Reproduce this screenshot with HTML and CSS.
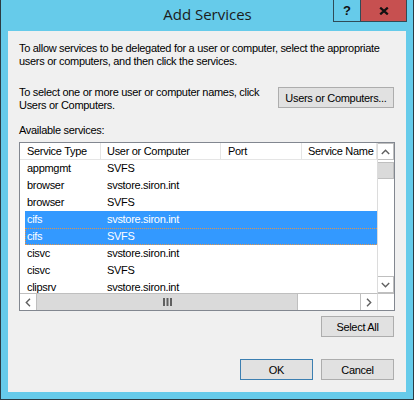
FILE: index.html
```html
<!DOCTYPE html>
<html>
<head>
<meta charset="utf-8">
<link rel="stylesheet" href="styles.css">
</head>
<body>
<div class="window">
  <div class="titlebar">
    <div class="title">Add Services</div>
    <div class="controls">
      <div class="ctl help">?</div>
      <div class="ctl close">
        <svg width="10" height="8" viewBox="0 0 10 8"><path d="M1.2 0.6 L8.8 7.4 M8.8 0.6 L1.2 7.4" stroke="#111" stroke-width="2.2" fill="none"/></svg>
      </div>
    </div>
  </div>
  <div class="client">
    <p class="intro">To allow services to be delegated for a user or computer, select the appropriate<br>users or computers, and then click the services.</p>
    <div class="pick">
      <p class="pick-text">To select one or more user or computer names, click<br>Users or Computers.</p>
      <button class="btn wide">Users or Computers...</button>
    </div>
    <div class="label">Available services:</div>
    <div class="list">
      <div class="content">
        <div class="row head">
          <div class="c c1">Service Type</div>
          <div class="c c2">User or Computer</div>
          <div class="c c3">Port</div>
          <div class="c c4">Service Name</div>
          <div class="c c5"></div>
        </div>
        <div class="row"><div class="c c1">appmgmt</div><div class="c c2">SVFS</div><div class="c c3"></div><div class="c c4"></div><div class="c c5"></div></div>
        <div class="row"><div class="c c1">browser</div><div class="c c2">svstore.siron.int</div><div class="c c3"></div><div class="c c4"></div><div class="c c5"></div></div>
        <div class="row"><div class="c c1">browser</div><div class="c c2">SVFS</div><div class="c c3"></div><div class="c c4"></div><div class="c c5"></div></div>
        <div class="row sel"><div class="c c1">cifs</div><div class="c c2">svstore.siron.int</div><div class="c c3"></div><div class="c c4"></div><div class="c c5"></div></div>
        <div class="row sel focus"><div class="c c1">cifs</div><div class="c c2">SVFS</div><div class="c c3"></div><div class="c c4"></div><div class="c c5"></div></div>
        <div class="row"><div class="c c1">cisvc</div><div class="c c2">svstore.siron.int</div><div class="c c3"></div><div class="c c4"></div><div class="c c5"></div></div>
        <div class="row"><div class="c c1">cisvc</div><div class="c c2">SVFS</div><div class="c c3"></div><div class="c c4"></div><div class="c c5"></div></div>
        <div class="row"><div class="c c1">clipsrv</div><div class="c c2">svstore.siron.int</div><div class="c c3"></div><div class="c c4"></div><div class="c c5"></div></div>
      </div>
      <div class="vscroll">
        <div class="arrow">
          <svg width="9" height="6" viewBox="0 0 9 6"><path d="M0.8 5 L4.5 1.3 L8.2 5" stroke="#606060" stroke-width="1.4" fill="none"/></svg>
        </div>
        <div class="vthumb"></div>
        <div class="vtrack"></div>
        <div class="arrow">
          <svg width="9" height="6" viewBox="0 0 9 6"><path d="M0.8 1 L4.5 4.7 L8.2 1" stroke="#606060" stroke-width="1.4" fill="none"/></svg>
        </div>
      </div>
      <div class="hscroll">
        <div class="arrow">
          <svg width="6" height="9" viewBox="0 0 6 9"><path d="M5 0.8 L1.3 4.5 L5 8.2" stroke="#606060" stroke-width="1.4" fill="none"/></svg>
        </div>
        <div class="hthumb">
          <svg width="9" height="8" viewBox="0 0 9 8"><path d="M1 0 V8 M4.5 0 V8 M8 0 V8" stroke="#606060" stroke-width="2" fill="none"/></svg>
        </div>
        <div class="htrack"></div>
        <div class="arrow">
          <svg width="6" height="9" viewBox="0 0 6 9"><path d="M1 0.8 L4.7 4.5 L1 8.2" stroke="#606060" stroke-width="1.4" fill="none"/></svg>
        </div>
      </div>
      <div class="corner"></div>
    </div>
    <div class="selectall-row">
      <button class="btn std">Select All</button>
    </div>
    <div class="footer">
      <button class="btn std default">OK</button>
      <button class="btn std">Cancel</button>
    </div>
  </div>
</div>
</body>
</html>
```

FILE: styles.css
```css
* { box-sizing: border-box; }
html, body { margin: 0; padding: 0; }
body {
  width: 414px;
  height: 400px;
  overflow: hidden;
  font-family: "Liberation Sans", Arial, sans-serif;
  font-size: 11px;
  letter-spacing: -0.3px;
  color: #000;
}
.window {
  width: 414px;
  height: 400px;
  background: #66cbea;
  border-left: 1px solid #2b3b42;
  border-right: 1px solid #2b3b42;
  border-bottom: 1px solid #2b3b42;
  padding: 0 7px 7px 7px;
  display: flex;
  flex-direction: column;
}
.titlebar {
  height: 31px;
  flex: none;
  display: grid;
  grid-template-columns: 1fr auto 1fr;
}
.title {
  grid-column: 2;
  font-family: "Open Sans", "Noto Sans", sans-serif;
  font-size: 15px;
  letter-spacing: 0;
  color: #1b1b1b;
  padding-top: 4px;
  line-height: 20px;
  margin-left: 1px;
}
.controls {
  grid-column: 3;
  justify-self: end;
  align-self: start;
  display: flex;
  height: 22px;
  margin-right: -1px;
  border: 1px solid #2f4b57;
  border-top: none;
}
.ctl {
  height: 21px;
  display: flex;
  align-items: center;
  justify-content: center;
}
.help {
  width: 27px;
  border-right: 1px solid #2f4b57;
  font-family: "Liberation Sans", Arial, sans-serif;
  font-weight: bold;
  font-size: 13px;
  letter-spacing: 0;
  color: #111;
}
.close {
  width: 45px;
  background: #c75050;
}
.client {
  flex: 1;
  background: #f0f0f0;
  padding: 11px 12px 12px 11px;
  display: flex;
  flex-direction: column;
}
p { margin: 0; }
.intro {
  line-height: 13px;
  white-space: nowrap;
}
.pick {
  margin-top: 18px;
  display: flex;
  justify-content: space-between;
  align-items: flex-start;
}
.pick-text {
  line-height: 13px;
  white-space: nowrap;
}
.btn {
  font-family: "Liberation Sans", Arial, sans-serif;
  font-size: 11px;
  letter-spacing: -0.3px;
  color: #000;
  background: #e1e1e1;
  border: 1px solid #adadad;
  padding: 0;
  margin: 0;
  height: 21px;
}
.wide {
  width: 116px;
  margin-top: 1px;
}
.label {
  margin-top: 12px;
  line-height: 13px;
}
.list {
  margin-top: 5px;
  margin-right: -1px;
  height: 169px;
  border: 1px solid #828790;
  background: #fff;
  display: grid;
  grid-template-columns: 1fr 17px;
  grid-template-rows: 1fr 17px;
}
.content {
  overflow: hidden;
  white-space: nowrap;
}
.row {
  display: flex;
  height: 17px;
  line-height: 17px;
  width: 420px;
}
.row:not(.head) { margin-left: 5px; }
.row.head {
  height: 17px;
  line-height: 16px;
  border-bottom: 1px solid #e5e5e5;
}
.row.head .c { border-right: 1px solid #e5e5e5; }
.row.head .c5 { border-right: none; }
.c { padding-left: 7px; flex: none; overflow: hidden; }
.c1 { width: 81px; }
.row:not(.head) .c1 { width: 76px; padding-left: 2px; }
.c2 { width: 120px; }
.c3 { width: 81px; }
.c4 { width: 75px; padding-left: 6px; }
.c5 { width: 63px; }
.row .c2 { padding-left: 6px; }
.row.sel { background: #3399ff; color: #fff; }
.row.focus { outline: 1px dotted #e2954c; outline-offset: -1px; }
.vscroll {
  grid-column: 2;
  grid-row: 1;
  display: flex;
  flex-direction: column;
  border-left: 1px solid #dcdcdc;
}
.arrow {
  width: 16px;
  height: 16px;
  flex: none;
  display: flex;
  align-items: center;
  justify-content: center;
  background: #fff;
}
.vscroll .arrow { border: 1px solid #bfbfbf; border-left: none; width: 16px; height: 17px; }
.vthumb {
  height: 17px;
  margin-top: 2px;
  background: #dadada;
  border: 1px solid #bfbfbf;
  border-left: none;
  flex: none;
}
.vtrack { flex: 1; }
.hscroll {
  grid-column: 1;
  grid-row: 2;
  display: flex;
  border-top: 1px solid #bfbfbf;
}
.hscroll .arrow {
  width: 17px;
  height: 16px;
  border-right: 1px solid #bfbfbf;
}
.hscroll .arrow:last-child {
  border-right: none;
  border-left: 1px solid #bfbfbf;
}
.hthumb {
  width: 261px;
  background: #dadada;
  border-right: 1px solid #bfbfbf;
  display: flex;
  align-items: center;
  justify-content: center;
}
.htrack { flex: 1; background: #fff; }
.corner {
  grid-column: 2;
  grid-row: 2;
  background: #fff;
  border-top: 1px solid #bfbfbf;
  border-left: 1px solid #dcdcdc;
}
.selectall-row {
  margin-top: 5px;
  display: flex;
  justify-content: flex-end;
}
.std { width: 73px; }
.footer {
  margin-top: auto;
  display: flex;
  justify-content: flex-end;
  gap: 8px;
}
.default { border-color: #3c7fb1; }
```
